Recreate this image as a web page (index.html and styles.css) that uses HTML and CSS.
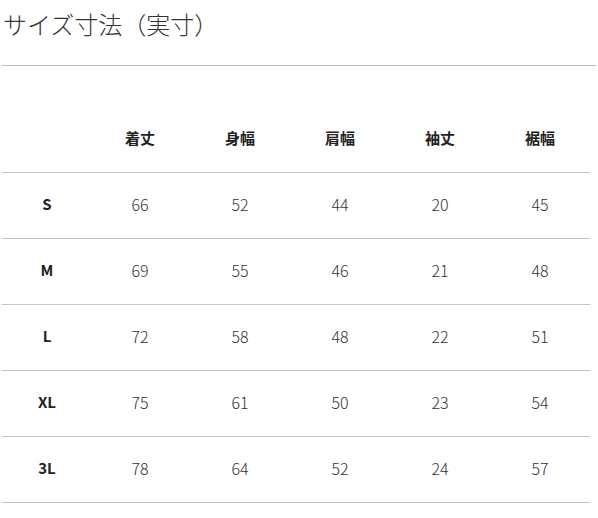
FILE: index.html
```html
<!DOCTYPE html>
<html lang="ja">
<head>
<meta charset="utf-8">
<link rel="stylesheet" href="styles.css">
</head>
<body>
<div class="page">
  <h2 class="title">サイズ寸法（実寸）</h2>
  <table class="size-table">
    <thead>
      <tr><th class="size"></th><th>着丈</th><th>身幅</th><th>肩幅</th><th>袖丈</th><th>裾幅</th></tr>
    </thead>
    <tbody>
      <tr><th class="size">S</th><td>66</td><td>52</td><td>44</td><td>20</td><td>45</td></tr>
      <tr><th class="size">M</th><td>69</td><td>55</td><td>46</td><td>21</td><td>48</td></tr>
      <tr><th class="size">L</th><td>72</td><td>58</td><td>48</td><td>22</td><td>51</td></tr>
      <tr><th class="size">XL</th><td>75</td><td>61</td><td>50</td><td>23</td><td>54</td></tr>
      <tr><th class="size">3L</th><td>78</td><td>64</td><td>52</td><td>24</td><td>57</td></tr>
    </tbody>
  </table>
</div>
</body>
</html>
```

FILE: styles.css
```css
html, body {
  margin: 0;
  padding: 0;
  background: #fff;
}
.page {
  padding: 0 2px;
  font-family: "Noto Sans CJK JP", "Noto Sans", sans-serif;
  color: #333;
}
.title {
  margin: 0;
  padding: 7px 0 0 1px;
  height: 66px;
  box-sizing: border-box;
  font-size: 24px;
  font-weight: 300;
  line-height: 34px;
  color: #333;
  border-bottom: 1px solid #bbb;
  width: 594px;
}
.size-table {
  margin-top: 41px;
  width: 588px;
  border-collapse: collapse;
  table-layout: fixed;
}
.size-table th,
.size-table td {
  width: 100px;
  height: 61px;
  padding: 0 0 4px;
  text-align: center;
  vertical-align: middle;
  font-size: 15px;
  line-height: 20px;
  border-bottom: 1px solid #c4c4c4;
}
.size-table th {
  font-weight: 700;
  color: #222;
}
.size-table td {
  font-weight: 300;
  color: #333;
  font-size: 16px;
}
.size-table .size {
  width: 86px;
  padding-left: 2px;
}
```
